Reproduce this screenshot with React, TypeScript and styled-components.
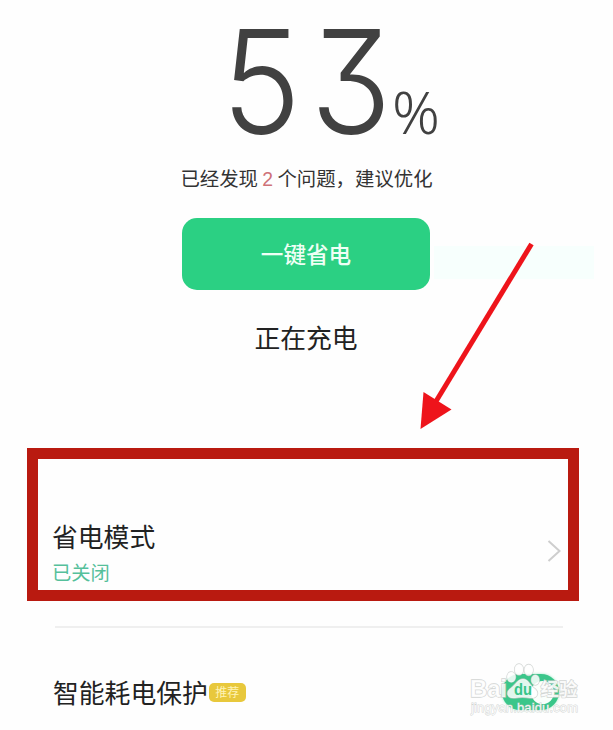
import React from 'react';
import styled, { createGlobalStyle } from 'styled-components';

const GlobalStyle = createGlobalStyle`
  * { box-sizing: border-box; }
  body {
    margin: 0;
    background: #fefefe;
    color: #222;
    font-family: 'Noto Sans CJK SC', sans-serif;
  }
`;

const Page = styled.main`
  position: relative;
  width: 613px;
  height: 730px;
  overflow: hidden;
  display: flex;
  flex-direction: column;
  background: linear-gradient(#f7fffd, #f7fffd) 434px 246px / 160px 33px no-repeat;
`;

const Summary = styled.section`
  width: 613px;
  height: 448px;
  display: flex;
  flex-direction: column;
  align-items: center;
`;

const Level = styled.div`
  display: flex;
  align-items: baseline;
  align-self: flex-start;
  margin-left: 219px;
  padding-top: 17px;
  height: 156px;
  font-family: Inter, sans-serif;
  color: #414141;
  white-space: nowrap;
`;

const Digits = styled.span`
  width: 175px;
  font-size: 144px;
  line-height: 130px;
  font-weight: 300;
  letter-spacing: 3.6px;
  font-feature-settings: 'cv09' 1, 'tnum' 1;
  transform: scaleX(0.93);
  transform-origin: left;
`;

const Percent = styled.span`
  font-family: 'Noto Sans', sans-serif;
  font-size: 59px;
  line-height: 60px;
  font-weight: 300;
  margin-left: -2px;
`;

const Issues = styled.p`
  margin: 7px 0 0;
  height: 30px;
  line-height: 30px;
  font-size: 19.4px;
  color: #333;
  white-space: pre;
`;

const Count = styled.span`
  color: #cf7278;
  font-family: 'Liberation Sans', sans-serif;
  line-height: 20px;
`;

const SaveButton = styled.button`
  width: 248px;
  height: 72px;
  margin: 25px 1px 0 0;
  padding: 0;
  border: 0;
  border-radius: 15px;
  background: #2bd083;
  color: #effff5;
  font: 500 22.6px/72px 'Noto Sans CJK SC', sans-serif;
`;

const Charging = styled.p`
  margin: 27px 1px 0 0;
  height: 40px;
  line-height: 40px;
  font-size: 25.8px;
`;

const ModeRow = styled.section`
  display: flex;
  align-items: flex-end;
  justify-content: space-between;
  width: 552px;
  height: 153px;
  margin-left: 27px;
  padding: 0 7px 4px 14px;
  border: 11px solid #b91a10;
`;

const Title = styled.h2`
  margin: 0;
  font-size: 25.8px;
  line-height: 38px;
  font-weight: 400;
  white-space: nowrap;
`;

const Status = styled.p`
  margin: 3px 0 0;
  font-size: 19.3px;
  line-height: 28px;
  color: #55c09b;
`;

const Chevron = styled.svg`
  width: 14px;
  height: 24px;
  margin-bottom: 23px;
`;

const Divider = styled.hr`
  width: 508px;
  height: 2px;
  margin: 25px 0 0 55px;
  border: 0;
  background: #efefef;
`;

const ProtectRow = styled.section`
  display: flex;
  align-items: center;
  height: 50px;
  margin: 39px 54px 0 53px;
`;

const Tag = styled.span`
  width: 37px;
  height: 19px;
  margin-left: 1px;
  border-radius: 5px;
  background: #e8c83c;
  color: #fff3b4;
  font-size: 12px;
  line-height: 18px;
  text-align: center;
`;

const Toggle = styled.span`
  display: flex;
  align-items: center;
  justify-content: flex-end;
  width: 57px;
  height: 36px;
  margin-left: auto;
  padding-right: 5px;
  border-radius: 18px;
  background: #3ac68a;
  box-shadow: 0 0 3px #9ee9c6;
`;

const Knob = styled.span`
  width: 23px;
  height: 23px;
  border-radius: 50%;
  background: #fafffc;
`;

const Arrow = styled.svg`
  position: absolute;
  left: 400px;
  top: 230px;
  width: 150px;
  height: 210px;
`;

const Watermark = styled.div`
  position: absolute;
  left: 468px;
  top: 662px;
  width: 115px;
  height: 58px;
`;

const mark = {
  fill: '#ffffff',
  fillOpacity: 0.85,
  stroke: '#c6cac8',
  strokeOpacity: 0.8,
  strokeWidth: 1.3,
  paintOrder: 'stroke',
} as const;

export default function App() {
  return (
    <>
      <GlobalStyle />
      <Page>
        <Summary>
          <Level>
            <Digits>53</Digits>
            <Percent>%</Percent>
          </Level>
          <Issues>已经发现 <Count>2</Count> 个问题，建议优化</Issues>
          <SaveButton>一键省电</SaveButton>
          <Charging>正在充电</Charging>
        </Summary>
        <ModeRow>
          <div>
            <Title>省电模式</Title>
            <Status>已关闭</Status>
          </div>
          <Chevron viewBox="0 0 14 24">
            <path d="M1.500 2 12.500 12 1.500 22" fill="none" stroke="#cecece" strokeWidth="2" />
          </Chevron>
        </ModeRow>
        <Divider />
        <ProtectRow>
          <Title>智能耗电保护</Title>
          <Tag>推荐</Tag>
          <Toggle><Knob /></Toggle>
        </ProtectRow>
        <Arrow viewBox="0 0 150 210">
          <path d="M131.500 14 35 173" stroke="#ee141b" strokeWidth="5" />
          <path d="M20.500 199 23.500 162 51.500 179.500Z" fill="#ee141b" />
        </Arrow>
        <Watermark>
          <svg width="115" height="58" viewBox="0 0 115 58" fontFamily="'Liberation Sans', sans-serif">
            <g {...mark}>
              <text x="2" y="35" fontSize="24" fontWeight="700" textLength="37">Bai</text>
              <ellipse cx="43.300" cy="15" rx="4.300" ry="5.200" />
              <ellipse cx="51" cy="7.500" rx="4.400" ry="5.600" />
              <ellipse cx="60.700" cy="8" rx="4.400" ry="5.600" />
              <ellipse cx="67.300" cy="18" rx="4" ry="5" />
              <path d="M55 17C50 17 48 22 43 26C37 30 39 37 47 36C52 35 57 35 62 36C70 37 72 30 66 26C61 22 60 17 55 17Z" />
            </g>
            <text x="46" y="33" fontSize="16" fontWeight="700" fill="#37c489" textLength="18" lengthAdjust="spacingAndGlyphs">du</text>
            <g {...mark}>
              <text x="72.500" y="34" fontSize="18.500" fontWeight="700" fontFamily="'Noto Sans CJK SC', sans-serif">经验</text>
              <text x="3" y="50" fontSize="13" textLength="107" strokeWidth="0.9">jingyan.baidu.com</text>
            </g>
          </svg>
        </Watermark>
      </Page>
    </>
  );
}
